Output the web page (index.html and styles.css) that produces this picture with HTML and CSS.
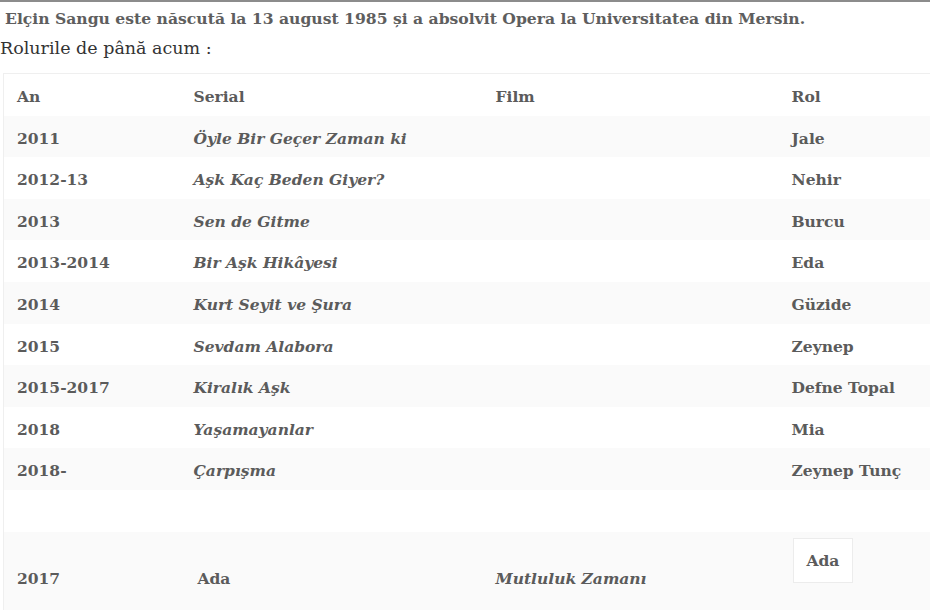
FILE: index.html
```html
<!DOCTYPE html>
<html lang="ro">
<head>
<meta charset="utf-8">
<title>Elçin Sangu</title>
<link rel="stylesheet" href="styles.css">
</head>
<body>
<div class="page">
  <p class="intro">Elçin Sangu este născută la 13 august 1985 și a absolvit Opera la Universitatea din Mersin.</p>
  <p class="lead">Rolurile de până acum :</p>
  <div class="table-wrap">
    <table class="roles">
      <colgroup>
        <col class="c-an"><col class="c-serial"><col class="c-film"><col class="c-rol">
      </colgroup>
      <thead>
        <tr><th>An</th><th>Serial</th><th>Film</th><th>Rol</th></tr>
      </thead>
      <tbody>
        <tr class="alt"><td>2011</td><td class="it">Öyle Bir Geçer Zaman ki</td><td></td><td>Jale</td></tr>
        <tr><td>2012-13</td><td class="it">Aşk Kaç Beden Giyer?</td><td></td><td>Nehir</td></tr>
        <tr class="alt"><td>2013</td><td class="it">Sen de Gitme</td><td></td><td>Burcu</td></tr>
        <tr><td>2013-2014</td><td class="it">Bir Aşk Hikâyesi</td><td></td><td>Eda</td></tr>
        <tr class="alt"><td>2014</td><td class="it">Kurt Seyit ve Şura</td><td></td><td>Güzide</td></tr>
        <tr><td>2015</td><td class="it">Sevdam Alabora</td><td></td><td>Zeynep</td></tr>
        <tr class="alt"><td>2015-2017</td><td class="it">Kiralık Aşk</td><td></td><td>Defne Topal</td></tr>
        <tr><td>2018</td><td class="it">Yaşamayanlar</td><td></td><td>Mia</td></tr>
        <tr class="alt"><td>2018-</td><td class="it">Çarpışma</td><td></td><td>Zeynep Tunç</td></tr>
        <tr class="empty"><td></td><td></td><td></td><td></td></tr>
        <tr class="alt last"><td>2017</td><td class="indent">Ada</td><td class="it">Mutluluk Zamanı</td><td class="top"><span class="box">Ada</span></td></tr>
      </tbody>
    </table>
  </div>
</div>
</body>
</html>
```
FILE: styles.css
```css
html, body {
  margin: 0;
  padding: 0;
  background: #ffffff;
  overflow: hidden;
}
body {
  font-family: "DejaVu Serif", "Liberation Serif", serif;
  color: #5b5b5b;
}
.page {
  border-top: 2px solid #8c8c8c;
  width: 930px;
  height: 608px;
  overflow: hidden;
}
.intro {
  margin: 0;
  padding: 3px 0 0 5px;
  font-size: 15.6px;
  font-weight: bold;
  line-height: 28px;
  color: #5e5e5e;
}
.lead {
  margin: 0;
  font-size: 17.5px;
  line-height: 30px;
  color: #333333;
}
.table-wrap {
  margin-top: 10px;
  padding-left: 3px;
}
.roles {
  width: 960px;
  border-collapse: collapse;
  table-layout: fixed;
  border-top: 1px solid #efefef;
  border-left: 1px solid #efefef;
  font-size: 15.5px;
  font-weight: bold;
  color: #5b5b5b;
}
.c-an { width: 177px; }
.c-serial { width: 302px; }
.c-film { width: 296px; }
.c-rol { width: auto; }
.roles th, .roles td {
  text-align: left;
  padding: 10px 13px 6px;
  line-height: 25.6px;
  height: 25.6px;
  vertical-align: middle;
  white-space: nowrap;
}
.roles tr.alt { background: #fafafa; }
.roles .it { font-style: italic; }
.roles .indent { padding-left: 17px; }
.roles tr.last td { padding-top: 34px; padding-bottom: 34px; }
.roles tr.last td.top { vertical-align: top; padding-top: 6px; }
.box {
  display: inline-block;
  margin-left: 1px;
  padding: 9px 13px;
  background: #ffffff;
  border: 1px solid #ececec;
}
```
